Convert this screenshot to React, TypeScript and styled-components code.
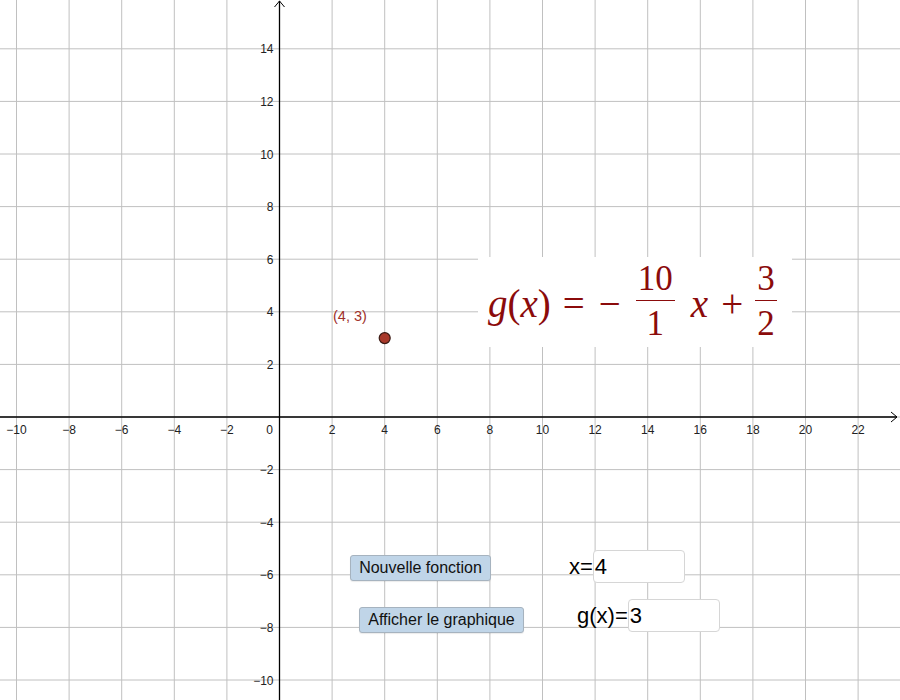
import styled, { createGlobalStyle } from "styled-components";

const GlobalStyle = createGlobalStyle`
  html, body {
    margin: 0;
    padding: 0;
    background: #fff;
  }
  body {
    font-family: "Liberation Sans", Arial, sans-serif;
  }
`;

const UNIT = 26.3;
const OX = 279.5;
const OY = 417;

const px = (x: number) => OX + x * UNIT;
const py = (y: number) => OY - y * UNIT;

const fmt = (n: number) => (n < 0 ? `\u2212${-n}` : `${n}`);

const Stage = styled.div`
  position: relative;
  width: 900px;
  height: 700px;
  overflow: hidden;
  background: #fff;
`;

const GraphSvg = styled.svg`
  display: block;
  font-family: "Liberation Sans", Arial, sans-serif;
  font-size: 12px;
`;

const Overlay = styled.div<{ $left: number; $top: number }>`
  position: absolute;
  left: ${(p) => p.$left}px;
  top: ${(p) => p.$top}px;
`;

const FormulaBox = styled(Overlay)`
  width: 314px;
  height: 90px;
  background: #fff;
  display: flex;
  align-items: center;
  justify-content: flex-start;
  padding: 2px 0 0 10px;
  color: #8b0b0b;
  font-family: "Liberation Serif", "Times New Roman", serif;
  font-size: 39px;
  box-sizing: border-box;
`;

const Ital = styled.span<{ $ml?: number }>`
  font-style: italic;
  margin-left: ${(p) => p.$ml ?? 0}px;
`;

const Op = styled.span<{ $l: number; $r: number }>`
  margin: 0 ${(p) => p.$r}px 0 ${(p) => p.$l}px;
`;

const Frac = styled.span`
  display: inline-flex;
  flex-direction: column;
  align-items: center;
  line-height: 1;
  font-size: 35px;
  transform: translateY(-2px);
`;

const Num = styled.span`
  padding: 0 2px 4px;
  border-bottom: 1.6px solid #8b0b0b;
`;

const Den = styled.span`
  padding-top: 5px;
`;

const Button = styled(Overlay).attrs({ as: "button" })<{ $width: number }>`
  width: ${(p) => p.$width}px;
  height: 26px;
  background: #c0d5e8;
  border: 1px solid #a6b3bf;
  border-radius: 3px;
  font-family: "Liberation Sans", Arial, sans-serif;
  font-size: 16px;
  color: #111;
  padding: 0;
  box-shadow: 0 1px 1px rgba(0, 0, 0, 0.08);
`;

const Field = styled(Overlay)`
  display: flex;
  align-items: center;
  font-family: "Liberation Sans", Arial, sans-serif;
  font-size: 22px;
  color: #000;
`;

const InputBox = styled.div`
  width: 92px;
  height: 33px;
  box-sizing: border-box;
  border: 1px solid #d6d6d6;
  border-radius: 4px;
  display: flex;
  align-items: center;
  padding-left: 1px;
  background: #fff;
`;

function Graph() {
  const xs: number[] = [];
  for (let k = -10; k <= 22; k += 2) xs.push(k);
  const ys: number[] = [];
  for (let k = -10; k <= 14; k += 2) ys.push(k);

  return (
    <GraphSvg width={900} height={700} viewBox="0 0 900 700">
      {xs.map((k) => (
        <line key={`vx${k}`} x1={px(k)} x2={px(k)} y1={0} y2={700} stroke="#c0c0c0" strokeWidth={1} />
      ))}
      {ys.map((k) => (
        <line key={`hy${k}`} x1={0} x2={900} y1={py(k)} y2={py(k)} stroke="#c0c0c0" strokeWidth={1} />
      ))}

      <line x1={0} x2={897} y1={OY} y2={OY} stroke="#000" strokeWidth={1.3} />
      <line x1={OX} x2={OX} y1={1} y2={700} stroke="#000" strokeWidth={1.3} />
      <polyline points={`${891},${OY - 5} ${897},${OY} ${891},${OY + 5}`} fill="none" stroke="#000" strokeWidth={1} />
      <polyline points={`${OX - 5},${7} ${OX},${1} ${OX + 5},${7}`} fill="none" stroke="#000" strokeWidth={1} />

      {xs.filter((k) => k !== 0).map((k) => (
        <text key={`lx${k}`} x={px(k)} y={OY + 17} textAnchor="middle" fill="#222">
          {fmt(k)}
        </text>
      ))}
      <text x={OX - 10} y={OY + 17} textAnchor="middle" fill="#222">0</text>
      {ys.filter((k) => k !== 0).map((k) => (
        <text key={`ly${k}`} x={OX - 6} y={py(k) + 4.5} textAnchor="end" fill="#222">
          {fmt(k)}
        </text>
      ))}

      <text x={333} y={321} fill="#a0302a" fontSize={14.5}>(4, 3)</text>
      <circle cx={px(4)} cy={py(3)} r={5.5} fill="#a8392b" stroke="#3a1a14" strokeWidth={1.2} />
    </GraphSvg>
  );
}

export default function App() {
  return (
    <>
      <GlobalStyle />
      <Stage>
        <Graph />
        <FormulaBox $left={478} $top={257}>
          <Ital>g</Ital>(<Ital>x</Ital>)
          <Op $l={12} $r={14}>=</Op>
          <Op $l={0} $r={15}>{"\u2212"}</Op>
          <Frac>
            <Num>10</Num>
            <Den>1</Den>
          </Frac>
          <Ital $ml={16}>x</Ital>
          <Op $l={13} $r={12}>+</Op>
          <Frac>
            <Num>3</Num>
            <Den>2</Den>
          </Frac>
        </FormulaBox>
        <Button $left={350} $top={555} $width={141}>Nouvelle fonction</Button>
        <Button $left={359} $top={607} $width={165}>Afficher le graphique</Button>
        <Field $left={569} $top={550}>
          x=
          <InputBox>4</InputBox>
        </Field>
        <Field $left={577} $top={599}>
          g(x)=
          <InputBox>3</InputBox>
        </Field>
      </Stage>
    </>
  );
}
